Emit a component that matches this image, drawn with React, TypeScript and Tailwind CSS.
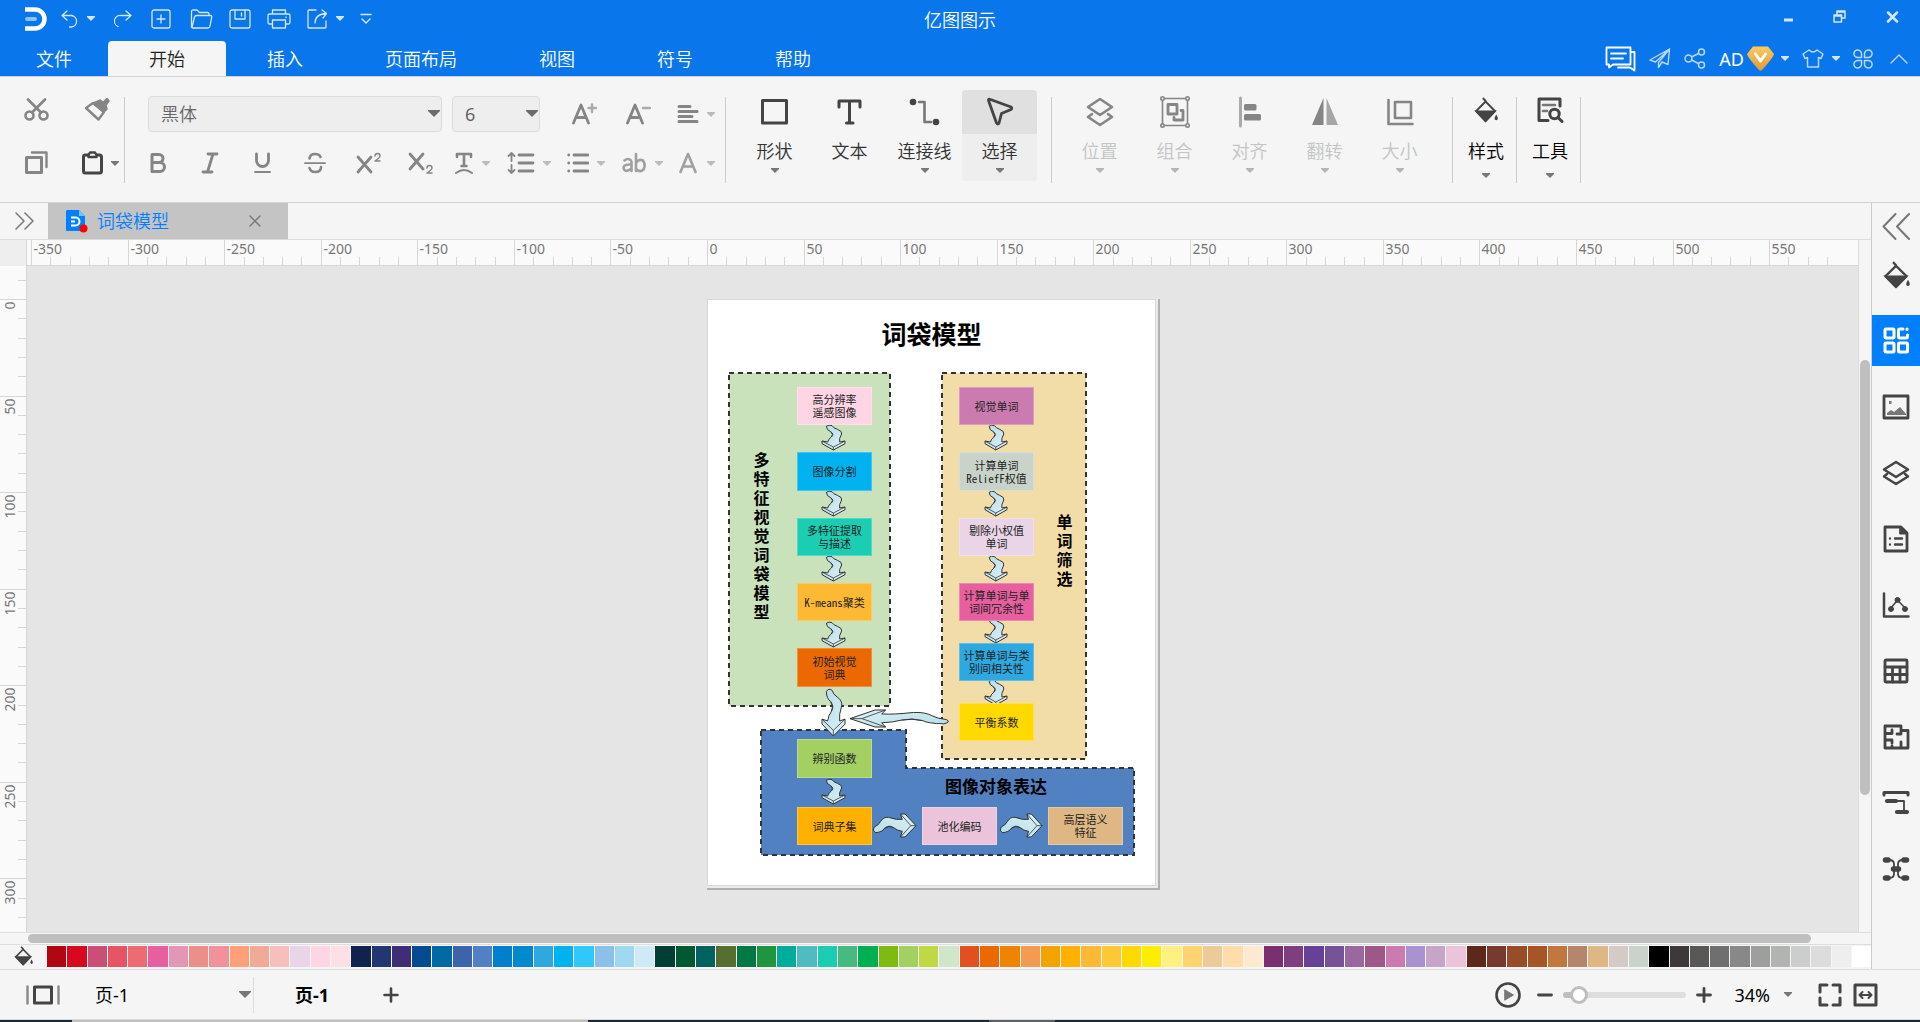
import React from 'react';
import clsx from 'clsx';

interface IconProps {
  w: number;
  h: number;
  sw?: number;
  className?: string;
  children: React.ReactNode;
}

const Icon = ({ w, h, sw = 2, className, children }: IconProps) => (
  <svg
    width={w}
    height={h}
    viewBox={`0 0 ${w} ${h}`}
    fill="none"
    stroke="currentColor"
    strokeWidth={sw}
    strokeLinecap="round"
    strokeLinejoin="round"
    aria-hidden="true"
    className={clsx('shrink-0', className)}
  >
    {children}
  </svg>
);

const Caret = ({ className }: { className?: string }) => (
  <svg width="8" height="5" viewBox="0 0 8 5" fill="currentColor" aria-hidden="true" className={clsx('shrink-0', className)}>
    <path d="M0 0H8V1L4 5L0 1Z" />
  </svg>
);

const BucketIcon = ({ w, h }: { w: number; h: number }) => (
  <svg width={w} height={h} viewBox="0 0 27 26" preserveAspectRatio="none" fill="none" stroke="currentColor" strokeWidth="2.2" aria-hidden="true" className="shrink-0">
    <path d="M10 1L13.500 4.500M2.500 14L13 4.500L23.500 14L13 24Z" strokeLinejoin="round" />
    <path d="M3 14.500H23L13 24Z" fill="currentColor" />
    <path d="M25 17.500Q27.500 21 26.500 22.500Q25 24 23.500 22.500Q22.500 21 25 17.500Z" fill="currentColor" stroke="none" />
  </svg>
);

/* ---------- title bar ---------- */

interface QuickAction {
  label: string;
  caret?: boolean;
  icon: React.ReactNode;
}

const editActions: QuickAction[] = [
  {
    label: '撤销',
    caret: true,
    icon: <Icon w={18} h={18} sw={1.3}><path d="M6 1L1 5.500L6 10M1 5.500H10.500A5.800 5.800 0 0 1 10.500 17H8.500" /></Icon>,
  },
  {
    label: '恢复',
    icon: <Icon w={18} h={18} sw={1.3}><path d="M12 1L17 5.500L12 10M17 5.500H7.500A5.800 5.800 0 0 0 4 16.500" /></Icon>,
  },
  {
    label: '新建',
    icon: <Icon w={20} h={20} sw={1.3}><rect x="1" y="1" width="18" height="18" rx="2" /><path d="M10 6V14M6 10H14" /></Icon>,
  },
  {
    label: '打开',
    icon: <Icon w={23} h={20} sw={1.3}><path d="M1.500 18V2.500Q1.500 1 3 1H7L9.500 3.500H17.500Q19 3.500 19 5V6.500M2 18.500L4.500 8Q5 6.500 6.500 6.500H20.500Q22 6.500 21.700 8L20 17Q19.500 19 18 19H2.500Q1.500 19 1.500 17" /></Icon>,
  },
];

const fileActions: QuickAction[] = [
  {
    label: '保存',
    icon: <Icon w={22} h={20} sw={1.3}><rect x="1" y="1" width="20" height="18" rx="2" /><path d="M6 1V10H16V1M12.500 4V7" /></Icon>,
  },
  {
    label: '打印',
    icon: <Icon w={24} h={20} sw={1.3}><path d="M5.500 5V1H18.500V5M5.500 15H2.500Q1 15 1 13.500V6.500Q1 5 2.500 5H21.500Q23 5 23 6.500V13.500Q23 15 21.500 15H18.500M5.500 11H18.500V19H5.500ZM19 8V8.500" /></Icon>,
  },
  {
    label: '导出',
    caret: true,
    icon: <Icon w={21} h={20} sw={1.3}><path d="M9 1H2Q1 1 1 2V18Q1 19 2 19H18Q19 19 19 18V12M8 14Q8 5 19.500 4.500M15 1L19.500 4.500L16 9" /></Icon>,
  },
  {
    label: '更多',
    icon: <Icon w={12} h={12} sw={1.500}><path d="M1 1.500H11M2 6L6 10L10 6" /></Icon>,
  },
];

const QuickButton = ({ label, icon, caret }: QuickAction) => (
  <button aria-label={label} className="flex items-center gap-2">
    {icon}
    {caret && <Caret />}
  </button>
);

const TitleBar = () => (
  <div className="grid h-[41px] grid-cols-[1fr_auto_1fr] items-start">
    <div className="flex h-[37px] items-center pl-[25px] text-[#d4e7fc]">
      <svg width="24" height="24" viewBox="0 0 24 24" fill="none" className="mr-3 shrink-0" aria-hidden="true">
        <path d="M0 2.500H10A9.500 9.500 0 0 1 10 21.500H0" stroke="#fff" strokeWidth="4.500" />
        <path d="M2 12H10" stroke="#8dc1f9" strokeWidth="4" strokeLinecap="round" />
      </svg>
      <div className="flex items-center gap-[19px]">
        {editActions.map(action => <QuickButton key={action.label} {...action} />)}
      </div>
      <div className="ml-4 flex items-center gap-4">
        {fileActions.map(action => <QuickButton key={action.label} {...action} />)}
      </div>
    </div>
    <h1 className="text-lg leading-10 text-white">亿图图示</h1>
    <div className="flex h-[33px] items-center justify-end gap-10 pr-[21px] text-[#d4e7fc]">
      <button aria-label="最小化" className="pt-[6px]"><Icon w={9} h={4} sw={3}><path d="M0 2H9" strokeLinecap="butt" /></Icon></button>
      <button aria-label="还原"><Icon w={13} h={13} sw={1.500}><path d="M4 5V1H12V8H9M4 2H12M1 5H8.500V12H1ZM1 6H8" /></Icon></button>
      <button aria-label="关闭"><Icon w={13} h={12} sw={2.500}><path d="M2 1.500L11 10.500M11 1.500L2 10.500" /></Icon></button>
    </div>
  </div>
);

const tabs = ['文件', '开始', '插入', '页面布局', '视图', '符号', '帮助'];

const MenuTabs = () => (
  <div className="flex h-[35px] justify-between">
    <nav className="flex">
      {tabs.map((tab, i) => (
        <button
          key={tab}
          className={clsx(
            'pt-px text-lg leading-[34px]',
            i === 0 ? 'px-9' : 'px-[41px]',
            tab === '开始' ? 'rounded-t-sm bg-[#f5f5f5] text-[#222]' : 'text-white'
          )}
        >
          {tab}
        </button>
      ))}
    </nav>
    <div className="flex items-center gap-[13px] pr-3 text-[#b9d9fc]">
      <button aria-label="评论" className="text-white">
        <Icon w={31} h={26} sw={1.800}><path d="M1.500 1.500H25.500V18.500H8L4 21.500V18.500H1.500ZM26 6H29.500V24.500L25 21.500H13M6 7.500H21M6 12.500H18" /></Icon>
      </button>
      <button aria-label="发送">
        <Icon w={22} h={21} sw={1.400}><path d="M20.500 1L1 12L6.500 14L20.500 1L19 16.500L13 14L9.500 19.500V14.500L20.500 1" /></Icon>
      </button>
      <button aria-label="分享">
        <Icon w={22} h={21} sw={1.500}><circle cx="4.500" cy="10.500" r="3.500" /><circle cx="17.500" cy="4" r="3" /><circle cx="17.500" cy="17" r="3" /><path d="M7.500 9L14.500 5.500M7.500 12L14.500 15.500" /></Icon>
      </button>
      <button className="flex items-center gap-[3px] text-lg font-normal text-white">
        AD
        <svg width="27" height="25" viewBox="0 0 27 25" aria-hidden="true">
          <defs><linearGradient id="gem" x1="0" y1="0" x2="0" y2="1"><stop offset="0" stopColor="#ffc95c" /><stop offset="1" stopColor="#e0993a" /></linearGradient></defs>
          <path d="M6 0.500H21L27 8Q26 12 15 24Q13.500 25.500 12 24Q1 12 0 8Z" fill="url(#gem)" />
          <path d="M8.500 8L13.500 15L18.500 8" fill="none" stroke="#fff" strokeWidth="3" strokeLinecap="round" strokeLinejoin="round" />
        </svg>
        <Caret className="ml-1 text-[#d4e7fc]" />
      </button>
      <button aria-label="皮肤" className="flex items-center gap-2">
        <Icon w={22} h={19} sw={1.500}><path d="M7 1L1 5L3 9.500L5.500 8.500V18H16.500V8.500L19 9.500L21 5L15 1Q11 5 7 1Z" /></Icon>
        <Caret className="text-[#d4e7fc]" />
      </button>
      <button aria-label="应用">
        <Icon w={20} h={20} sw={1.500}>
          <path d="M8.500 8.500H5A3.800 3.800 0 1 1 8.500 5ZM11.500 8.500V5A3.800 3.800 0 1 1 15 8.500ZM8.500 11.500V15A3.800 3.800 0 1 1 5 11.500ZM11.500 11.500H15A3.800 3.800 0 1 1 11.500 15Z" />
        </Icon>
      </button>
      <button aria-label="收起" className="pl-1">
        <Icon w={18} h={10} sw={1.400}><path d="M1 9L9 1L17 9" /></Icon>
      </button>
    </div>
  </div>
);

/* ---------- ribbon ---------- */

const Divider = () => <div className="mt-5 h-[86px] w-px shrink-0 bg-[#ccc]" />;

interface DropFieldProps {
  label: string;
  value: string;
  className: string;
}

const DropField = ({ label, value, className }: DropFieldProps) => (
  <div className={clsx('relative', className)}>
    <select aria-label={label} className="h-9 w-full appearance-none rounded-sm border border-[#dcdcdf] bg-[#eee] pl-3 text-lg leading-8 text-[#666]">
      <option>{value}</option>
    </select>
    <svg width="12" height="7" viewBox="0 0 12 7" fill="#6b6b6b" className="pointer-events-none absolute top-[14px] right-0.5" aria-hidden="true">
      <path d="M0 0H12V1L6 7L0 1Z" />
    </svg>
  </div>
);

const LetterA = <path d="M1.500 20L9 2L16.500 20M4.500 14.500H13.500" />;

const styleTools = [
  { label: '加粗', icon: <Icon w={20} h={22} sw={3}><path d="M4 2.500H11A4 4 0 0 1 11 10.500H4ZM4 10.500H12A4.300 4.300 0 0 1 12 19.500H4Z" /></Icon> },
  { label: '斜体', icon: <Icon w={20} h={22} sw={2.800}><path d="M8 2H17M3 20H12M13 2L7.500 20" /></Icon> },
  { label: '下划线', icon: <Icon w={20} h={22} sw={2.800}><path d="M4.500 2V8.500A6 6 0 0 0 16.500 8.500V2" /><path d="M3 20H18" strokeWidth="1.800" /></Icon> },
  { label: '删除线', icon: <Icon w={22} h={22} sw={2.600}><path d="M5.500 6.500Q6 2 11 2Q15.500 2 16.500 5M5.500 16Q6.500 20 11 20Q17 20 17 15" /><path d="M1 11.200H21" strokeWidth="1.800" /></Icon> },
  { label: '上标', icon: <Icon w={25} h={22} sw={2.800}><path d="M2 5L15 20M15 5L2 20" /><path d="M19 4Q19 1.500 21.500 1.500Q24 1.500 24 4Q24 5.500 19 9H24" strokeWidth="1.500" /></Icon> },
  { label: '下标', icon: <Icon w={25} h={22} sw={2.800}><path d="M2 2L15 17M15 2L2 17" /><path d="M19 16Q19 13.500 21.500 13.500Q24 13.500 24 16Q24 17.500 19 21H24" strokeWidth="1.500" /></Icon> },
];

const paragraphTools = [
  { label: '文字效果', icon: <Icon w={20} h={22} sw={2.600}><path d="M3 5V2H17V5M10 2V14M7.500 14H12.500" /><path d="M2 21Q10 15 18 21" strokeWidth="2" /></Icon> },
  { label: '行距', icon: <Icon w={28} h={22} sw={2.800}><path d="M12 3H26M12 11H26M12 19H26" /><path d="M4.500 1V9M1.500 4L4.500 1L7.500 4M4.500 13V21M1.500 18L4.500 21L7.500 18" strokeWidth="1.800" /></Icon> },
  { label: '项目符号', icon: <Icon w={22} h={22} sw={2.800}><path d="M7 3H21M7 11H21M7 19H21M1.700 3V3.100M1.700 11V11.100M1.700 19V19.100" /></Icon> },
  {
    label: '大小写',
    icon: <Icon w={25} h={22} sw={2.600} className="text-[#a0a0a0]"><path d="M2.500 8.500Q6 5.500 9 8.500Q9.500 9.500 9.500 11V19M9.500 12.500Q1.500 12 1.500 16Q3 21.500 9.500 16.500M14 2V19M14 11Q17 6.500 21 8.500Q24 13 21.500 17.500Q18 21 14 17" /></Icon>,
  },
  { label: '字体颜色', icon: <Icon w={20} h={22} sw={2.600} className="text-[#a0a0a0]">{LetterA}</Icon> },
];

const bigTools = [
  { label: '形状', caret: true, icon: <Icon w={28} h={28} sw={3}><rect x="1.500" y="2.500" width="24" height="22.500" /></Icon> },
  { label: '文本', caret: false, icon: <Icon w={28} h={28} sw={3}><path d="M3 9V3H24V9M13.500 3V25M10.500 25H17" /></Icon> },
  {
    label: '连接线',
    caret: true,
    icon: (
      <Icon w={32} h={28} sw={2.600}>
        <path d="M10 4H15.500V24H22" stroke="#777" />
        <circle cx="4" cy="4" r="2" fill="currentColor" />
        <circle cx="27" cy="24" r="2" fill="currentColor" />
      </Icon>
    ),
  },
];

const arrangeTools = [
  { label: '位置', icon: <Icon w={28} h={32} sw={2.600}><path d="M14 3L26 11L14 19L2 11ZM6 18L2 21L14 29L26 21L22 18" /></Icon> },
  {
    label: '组合',
    icon: (
      <Icon w={30} h={32} sw={1.600}>
        <rect x="2.500" y="2.500" width="25" height="27" />
        <g fill="#f5f5f5"><circle cx="2.500" cy="2.500" r="1.700" /><circle cx="27.500" cy="2.500" r="1.700" /><circle cx="2.500" cy="29.500" r="1.700" /><circle cx="27.500" cy="29.500" r="1.700" /></g>
        <path d="M8 8.500H17V18H8ZM21 14.500H23V24H14V21.500" strokeWidth="2.800" />
      </Icon>
    ),
  },
  {
    label: '对齐',
    icon: <Icon w={24} h={32} sw={3}><path d="M2.500 2V30" stroke="#aaa" /><path d="M7.500 9.500H17V13H7.500ZM7.500 19.500H21.500V23H7.500Z" fill="currentColor" /></Icon>,
  },
  {
    label: '翻转',
    icon: <Icon w={28} h={32} sw={0}><path d="M12.500 2V29H1Z" fill="currentColor" /><path d="M15.500 2V29H27Z" fill="#a6a6a6" /></Icon>,
  },
  { label: '大小', icon: <Icon w={28} h={32} sw={2.600}><path d="M2.500 4V28H26.500" /><rect x="9" y="6" width="16" height="16" /></Icon> },
];

const Ribbon = () => (
  <div className="flex h-[127px] border-y border-[#d2d2d2] bg-[#f5f5f5] text-[#858585]">
    <div className="grid w-[124px] shrink-0 grid-cols-[58px_42px] grid-rows-[44px_44px] items-center gap-y-[10px] pt-[10px] pl-6">
      <button aria-label="剪切">
        <Icon w={25} h={23} sw={2.600}><circle cx="5.500" cy="17.500" r="4" /><circle cx="19.500" cy="17.500" r="4" /><path d="M4 1.500L17 14.500M21 1.500L8 14.500" /></Icon>
      </button>
      <button aria-label="格式刷">
        <Icon w={28} h={25} sw={2.400}><path d="M4 11L11 6L22 15L16.500 22.500Z" /><path d="M12 6L18 3.500L21 6L25 2L26.500 4L23.500 8L24.500 12L21.500 14.500Z" fill="currentColor" /></Icon>
      </button>
      <button aria-label="复制">
        <Icon w={24} h={24} sw={3}><rect x="2.500" y="6.500" width="15" height="15" /><path d="M8 1.500H22.500V16" strokeWidth="2.400" /></Icon>
      </button>
      <button aria-label="粘贴" className="flex items-center gap-[7px] text-[#444]">
        <Icon w={22} h={24} sw={3}><rect x="1.500" y="4" width="18" height="18" rx="2" /><path d="M6.500 4L8 1.500H13L14.500 4V6H6.500Z" fill="#f5f5f5" strokeWidth="2.400" /></Icon>
        <Caret className="text-[#777]" />
      </button>
    </div>
    <Divider />
    <div className="w-[600px] shrink-0 pt-[19px] pr-[10px] pl-[23px]">
      <div className="flex items-center">
        <DropField label="字体" value="黑体" className="w-[294px]" />
        <DropField label="字号" value="6" className="ml-[10px] w-[88px] font-normal" />
        <button aria-label="增大字号" className="ml-8">
          <Icon w={25} h={22} sw={2.800}>{LetterA}<path d="M20 1.500V9M16.500 5H24" stroke="#aaa" strokeWidth="2.400" /></Icon>
        </button>
        <button aria-label="减小字号" className="ml-[29px]">
          <Icon w={25} h={22} sw={2.800}>{LetterA}<path d="M17 5H24" stroke="#aaa" strokeWidth="2.400" /></Icon>
        </button>
        <button aria-label="对齐方式" className="ml-auto flex items-center gap-2">
          <Icon w={22} h={20} sw={3}><path d="M2 2.500H13M2 7.500H20M2 12.500H15M2 17.500H20" /></Icon>
          <Caret className="text-[#bbb]" />
        </button>
      </div>
      <div className="mt-5 flex items-center">
        <div className="flex gap-[26px]">
          {styleTools.map(({ label, icon }) => (
            <button key={label} aria-label={label} className="w-[26px]">{icon}</button>
          ))}
        </div>
        <div className="ml-5 flex flex-1 justify-between">
          {paragraphTools.map(({ label, icon }) => (
            <button key={label} aria-label={label} className="flex items-center gap-2">
              {icon}
              <Caret className="text-[#bbb]" />
            </button>
          ))}
        </div>
      </div>
    </div>
    <Divider />
    <div className="flex pr-[14px] pl-[11px] pt-[13px] text-[#333]">
      {bigTools.map(({ label, icon, caret }) => (
        <button key={label} className="flex h-[91px] w-[75px] flex-col items-center">
          <span className="flex h-11 items-center text-[#444]">{icon}</span>
          <span className="pt-px text-lg leading-8">{label}</span>
          {caret && <Caret className="mt-px text-[#777]" />}
        </button>
      ))}
      <button className="flex h-[91px] w-[75px] flex-col items-center rounded-sm bg-[#eee]">
        <span className="flex h-11 w-full items-center justify-center rounded-t-sm bg-[#e0e0e0] text-[#444]">
          <Icon w={28} h={30} sw={2.800}><path d="M2.500 3.500Q2 1.500 4.500 2.500L25 10Q26.500 11 25 12.500L15.500 16.500L13 26Q12 28 10.500 26Z" /></Icon>
        </span>
        <span className="pt-px text-lg leading-8">选择</span>
        <Caret className="mt-px text-[#777]" />
      </button>
    </div>
    <Divider />
    <div className="flex pr-[15px] pl-[10px] pt-[13px]">
      {arrangeTools.map(({ label, icon }) => (
        <button key={label} className="flex h-[91px] w-[75px] flex-col items-center">
          <span className="flex h-11 items-center">{icon}</span>
          <span className="pt-px text-lg leading-8 text-[#c4c4c4]">{label}</span>
          <Caret className="mt-px text-[#b5b5b5]" />
        </button>
      ))}
    </div>
    <Divider />
    <button className="flex w-[63px] flex-col items-center pt-[13px] pl-[3px] text-[#444]">
      <span className="flex h-11 items-center pb-1"><BucketIcon w={24} h={26} /></span>
      <span className="pt-px text-lg leading-8 text-black">样式</span>
      <Caret className="mt-[6px] text-[#777]" />
    </button>
    <Divider />
    <button className="flex w-[63px] flex-col items-center pt-[13px] pl-[3px] text-[#444]">
      <span className="flex h-11 items-center pb-1">
        <Icon w={28} h={26} sw={3}><path d="M24 9V2H3V23.500H12" /><path d="M7 8H19M7 14H11" stroke="#777" strokeWidth="2.600" /><circle cx="18.500" cy="17" r="4.700" /><path d="M22 20.500L26 24.500" /></Icon>
      </span>
      <span className="pt-px text-lg leading-8 text-black">工具</span>
      <Caret className="mt-[6px] text-[#777]" />
    </button>
    <Divider />
  </div>
);

const DocTabs = () => (
  <div className="flex h-9 items-stretch">
    <button aria-label="展开符号库" className="flex w-12 items-center justify-center text-[#777]">
      <Icon w={19} h={18} sw={1.500}><path d="M1 1L9 9L1 17M10 1L18 9L10 17" /></Icon>
    </button>
    <div className="flex w-60 items-center bg-[#c4c4c4] pr-[27px] pl-[18px]">
      <svg width="22" height="23" viewBox="0 0 22 23" aria-hidden="true">
        <path d="M1 0H13L19 6V21H1Q0 21 0 20V1Z" fill="#0080ff" />
        <path d="M13 0L19 6H13Z" fill="#7fbfff" />
        <path d="M5 7.500H9.500A4 4 0 0 1 9.500 15.500H5M5 11.500H9" fill="none" stroke="#fff" strokeWidth="2" />
        <circle cx="17.500" cy="18.500" r="4" fill="red" />
      </svg>
      <span className="ml-[9px] text-lg leading-9 text-[#0080ff]">词袋模型</span>
      <button aria-label="关闭文档" className="ml-auto text-[#777]">
        <Icon w={12} h={12} sw={1.400}><path d="M1 1L11 11M11 1L1 11" /></Icon>
      </button>
    </div>
  </div>
);

/* ---------- rulers ---------- */

const STEP = 19.31; // px per 10 mm at the current zoom

const HorizontalRuler = () => (
  <svg className="h-[26px] w-full bg-[#fafafa] font-normal" aria-label="水平标尺">
    {Array.from({ length: 94 }, (_, i) => i - 35).map(n => {
      const x = Math.round(680 + n * STEP) + 0.5;
      const major = n % 5 === 0;
      return (
        <g key={n}>
          <line x1={x} x2={x} y1={major ? 0 : 17} y2={26} stroke="#d6d6d6" />
          {major && <text x={x + 2} y="14" fontSize="14" fill="#777">{n * 10}</text>}
        </g>
      );
    })}
    <line x1="0" x2="100%" y1="25.500" y2="25.500" stroke="#d6d6d6" />
  </svg>
);

const VerticalRuler = () => (
  <svg className="h-full w-[27px] bg-[#fafafa] font-normal" aria-label="垂直标尺">
    {Array.from({ length: 34 }, (_, i) => i - 1).map(n => {
      const y = Math.round(33 + n * STEP) + 0.5;
      const major = n % 5 === 0;
      return (
        <g key={n}>
          <line y1={y} y2={y} x1={major ? 0 : 18} x2={26} stroke="#d6d6d6" />
          {major && <text transform={`translate(15 ${y + 2}) rotate(-90)`} textAnchor="end" fontSize="14" fill="#777">{n * 10}</text>}
        </g>
      );
    })}
    <line y1="0" y2="100%" x1="26.500" x2="26.500" stroke="#d6d6d6" />
  </svg>
);

/* ---------- diagram ---------- */

interface Node {
  x: number;
  y: number;
  h?: number;
  fill: string;
  lines: string[];
}

const nodes: Node[] = [
  { x: 89, y: 87, fill: '#fed5e5', lines: ['高分辨率', '遥感图像'] },
  { x: 89, y: 152, h: 39, fill: '#00b2f0', lines: ['图像分割'] },
  { x: 89, y: 218, fill: '#1bcdb3', lines: ['多特征提取', '与描述'] },
  { x: 89, y: 283, fill: '#fdb933', lines: ['K-means聚类'] },
  { x: 89, y: 348, h: 39, fill: '#ec6800', lines: ['初始视觉', '词典'] },
  { x: 89, y: 439, h: 39, fill: '#a4d063', lines: ['辨别函数'] },
  { x: 89, y: 507, fill: '#ffb000', lines: ['词典子集'] },
  { x: 251, y: 87, fill: '#cc7bb0', lines: ['视觉单词'] },
  { x: 251, y: 152, h: 39, fill: '#c9d3ca', lines: ['计算单词', 'ReliefF权值'] },
  { x: 251, y: 218, fill: '#ead5e8', lines: ['剔除小权值', '单词'] },
  { x: 251, y: 283, fill: '#e75f9f', lines: ['计算单词与单', '词间冗余性'] },
  { x: 251, y: 343, fill: '#2da8e1', lines: ['计算单词与类', '别间相关性'] },
  { x: 251, y: 403, fill: '#ffd900', lines: ['平衡系数'] },
  { x: 214, y: 507, fill: '#ebc3da', lines: ['池化编码'] },
  { x: 340, y: 507, fill: '#dfb784', lines: ['高层语义', '特征'] },
];

interface Arrow {
  x: number;
  y: number;
  w: number;
  h: number;
  dir?: 'left' | 'right';
}

const arrows: Arrow[] = [
  { x: 115, y: 126, w: 23, h: 25 },
  { x: 115, y: 192, w: 23, h: 25 },
  { x: 115, y: 257, w: 23, h: 25 },
  { x: 115, y: 323, w: 23, h: 25 },
  { x: 115, y: 390, w: 23, h: 47 },
  { x: 115, y: 480, w: 23, h: 25 },
  { x: 278, y: 126, w: 22, h: 25 },
  { x: 278, y: 192, w: 22, h: 25 },
  { x: 278, y: 257, w: 22, h: 25 },
  { x: 278, y: 319, w: 22, h: 25 },
  { x: 278, y: 381, w: 22, h: 25 },
  { x: 166, y: 515, w: 43, h: 23, dir: 'right' },
  { x: 293, y: 515, w: 42, h: 23, dir: 'right' },
  { x: 143, y: 411, w: 99, h: 17, dir: 'left' },
];

const WaveArrow = ({ x, y, w, h, dir }: Arrow) => {
  const flat = dir !== undefined;
  const sx = w / (flat ? 75 : 69);
  const sy = h / (flat ? 69 : 75);
  const turn = dir === 'right' ? 'matrix(0 -1 1 0 0 69)' : dir === 'left' ? 'matrix(0 -1 -1 0 75 69)' : '';
  return (
    <g transform={`translate(${x} ${y}) scale(${sx} ${sy}) ${turn}`}>
      <path
        d="M13 4Q20 -2 30 2Q34 9 46 13Q61 18 59 27Q50 42 53 51L69 48V56L34 75L0 56V48L17 51Q19 42 28 36Q36 28 26 20Q14 16 13 4Z"
        fill="url(#ice)"
        stroke="#333"
        vectorEffect="non-scaling-stroke"
      />
      <path d="M0 48L34 66L69 48M34 66V75M26 20Q38 28 28 36" fill="none" stroke="#333" strokeWidth="0.800" vectorEffect="non-scaling-stroke" />
    </g>
  );
};

const VerticalLabel = ({ text, className }: { text: string; className: string }) => (
  <div className={clsx('absolute flex w-[19px] flex-col items-center text-base leading-[19px] font-bold text-black', className)}>
    {text.split('').map((c, i) => <span key={i}>{c}</span>)}
  </div>
);

const Diagram = () => (
  <div className="absolute top-[33px] left-[680px] h-[591px] w-[453px] border-r-2 border-b-2 border-[#b0b0b0] bg-[#ebebeb]">
    <div className="relative h-[587px] w-[449px] border border-[#d8d8d8] bg-white">
      <svg className="absolute inset-0" width="447" height="585" viewBox="1 1 447 585" fill="none" aria-hidden="true">
        <defs>
          <linearGradient id="ice" x1="0" y1="0" x2="1" y2="1"><stop offset="0" stopColor="#b4dce8" /><stop offset="1" stopColor="#def1f6" /></linearGradient>
        </defs>
        <g stroke="#333" strokeWidth="2" strokeDasharray="5 4">
          <rect x="22" y="74" width="161" height="333" fill="#c9e2bb" />
          <rect x="235" y="74" width="144" height="386" fill="#f2dda9" />
          <path d="M54 431H199V469H427V556H54Z" fill="#5281c1" />
        </g>
        {arrows.map((arrow, i) => <WaveArrow key={i} {...arrow} />)}
      </svg>
      <h2 className="absolute top-4 w-full text-center text-[25px] leading-9 font-bold text-black">词袋模型</h2>
      <VerticalLabel text="多特征视觉词袋模型" className="top-[151px] left-[44px]" />
      <VerticalLabel text="单词筛选" className="top-[213px] left-[347px]" />
      <h3 className="absolute top-[475px] left-[227px] w-[122px] text-center text-[17px] leading-6 font-bold text-black">图像对象表达</h3>
      {nodes.map(({ x, y, h = 38, fill, lines }) => (
        <div
          key={lines.join('')}
          className="absolute flex w-[75px] flex-col items-center justify-center border border-white/25 font-['Noto_Sans_Mono_CJK_SC','Noto_Sans_CJK_SC',sans-serif] text-[11px] leading-[13px] font-normal whitespace-nowrap text-[#222]"
          style={{ left: x, top: y, height: h, backgroundColor: fill }}
        >
          {lines.map(line => <span key={line}>{line}</span>)}
        </div>
      ))}
    </div>
  </div>
);

/* ---------- right panel ---------- */

const panels = [
  { label: '填充', icon: <BucketIcon w={27} h={28} /> },
  {
    label: '符号',
    active: true,
    icon: <Icon w={27} h={27} sw={3}><rect x="2" y="2" width="9" height="9" rx="1" /><path d="M20 2H17Q15.500 2 15.500 3.500V9.500Q15.500 11 17 11H23Q24.500 11 24.500 9.500V8M24 2V2.500" /><rect x="2" y="16" width="9" height="9" rx="1" /><rect x="15.500" y="16" width="9" height="9" rx="1" /></Icon>,
  },
  {
    label: '图片',
    icon: <Icon w={28} h={26} sw={2.800}><rect x="2" y="2" width="24" height="22" /><path d="M5 21V19L9 16L12 18L18 13L24 20V21Z" fill="#777" stroke="none" /><path d="M7 7H9.500V10H7Z" fill="#777" stroke="none" /></Icon>,
  },
  { label: '图层', icon: <Icon w={28} h={26} sw={2.500}><path d="M14 2L26 9.500L14 17L2 9.500ZM5 14L2 16.500L14 24L26 16.500L23 14" /></Icon> },
  { label: '页面', icon: <Icon w={26} h={28} sw={2.800}><path d="M2 2H18L24 8V26H2Z" /><path d="M17 2L24 9H17Z" fill="currentColor" strokeWidth="1" /><path d="M7 13.500V13.500M12 13.500H19M7 19.500V19.500M12 19.500H19" strokeWidth="2.400" /></Icon> },
  {
    label: '图表',
    icon: <Icon w={28} h={26} sw={2.500}><path d="M2 1.500V24.500H26.500" /><g strokeWidth="1.600"><path d="M9 16L15.500 8L23 16" /></g><g fill="currentColor" strokeWidth="1"><circle cx="9" cy="17" r="2.500" /><circle cx="15.500" cy="8" r="2.500" /><circle cx="23" cy="17" r="2.500" /></g></Icon>,
  },
  { label: '表格', icon: <Icon w={26} h={26} sw={2.800}><rect x="2" y="2" width="22" height="22" rx="1" /><path d="M2 9H24M2 16.500H24M9.500 9V24M17 9V24" /></Icon> },
  { label: '平面图', icon: <Icon w={27} h={26} sw={2.800}><path d="M2 2H18V6.500H25V24H2ZM2 9.500H9V6M2 16H9V19M9 24V22M18 6.500V10H14M18 18V24" /></Icon> },
  {
    label: '甘特图',
    icon: <Icon w={28} h={26} sw={3}><path d="M2 5V2.500H26V5" /><path d="M5 11H14M15 22H25" strokeWidth="4.200" /><path d="M14 11H22V22" strokeWidth="1.800" /></Icon>,
  },
  {
    label: '思维导图',
    icon: <Icon w={28} h={26} sw={1.800}><path d="M7 4Q12 4 12 8V18Q12 22 7 22M21 4Q16 4 16 8V18Q16 22 21 22M10 13H18" /><path d="M3.500 4H6M22 4H24.500M3.500 22H6M22 22H24.500M11.500 13H16.500" strokeWidth="5.500" /></Icon>,
  },
];

const SidePanel = () => (
  <aside className="flex w-[49px] shrink-0 flex-col items-stretch border-l border-[#ccc] text-[#444]">
    <button aria-label="展开面板" className="flex h-[46px] items-center justify-center text-[#777]">
      <Icon w={28} h={27} sw={2}><path d="M13.500 1L1.500 13.500L13.500 26M27 1L15 13.500L27 26" /></Icon>
    </button>
    <div className="flex flex-col gap-[15px]">
      {panels.map(({ label, icon, active }) => (
        <button key={label} aria-label={label} className={clsx('flex h-[51px] items-center justify-center', active && 'bg-[#0080ff] text-white')}>
          {icon}
        </button>
      ))}
    </div>
  </aside>
);

/* ---------- colours and status ---------- */

const palette = `
  b00710 d9091d c94f77 e95464 ec6c71 e75f9f e397b5 ed8f89 f0919b ffa07a f0ab97 f6bfbd ead5e8 fed5e5 fde0e5
  11224f 22376f 402d77 064a91 0069a4 3e63ad 5281c3 007fcf 0089cf 2da8e1 00b2f0 30c7f9 8bc0e9 a0d8ef cfeaf6
  004034 005930 00635f 566e30 007945 1e963f 00ad9d 50bcc2 1bcdb3 47ba7f 00b050 7fba10 a4d063 bfd845 cfe6c9
  e25020 ec6800 f08300 f39a53 f2a502 ffb000 fdb933 fac933 ffd900 ffed00 fdf182 ffd470 ebcc99 ffdcaa fde8d0
  7a3070 7f3e80 674196 765396 98689e 9d5788 cc7bb0 aa92d0 c7a5c8 ebc3da
  5b281a 773a30 964d28 a95427 c17840 b5866b dfb784 d5cbc6 c9d3ca
  000000 3e3838 5a5757 6f6f6f 888888 9d9f9d b2b4b2 cccecd dcdcdc eeeeee ffffff
`.trim().split(/\s+/);

const ColorBar = () => (
  <div className="flex h-[25px] items-start border-t border-[#dedede] pt-px">
    <button aria-label="填充颜色" className="flex w-[47px] shrink-0 items-center justify-center text-[#444]">
      <BucketIcon w={19} h={20} />
    </button>
    <div className="flex h-[21px] flex-1 gap-px">
      {palette.map(color => (
        <button key={color} aria-label={`#${color}`} className="flex-1" style={{ backgroundColor: `#${color}` }} />
      ))}
    </div>
  </div>
);

const StatusBar = () => (
  <footer className="flex h-[51px] items-center justify-between border-y border-[#dcdcdc] text-lg text-black">
    <div className="flex items-center">
      <button aria-label="页面视图" className="ml-[26px] text-[#444]">
        <Icon w={34} h={20} sw={3}><rect x="8.500" y="2" width="17" height="16" /><path d="M1.500 1.500V18.500M32.500 1.500V18.500" stroke="#888" strokeWidth="2.400" /></Icon>
      </button>
      <div className="relative ml-7 w-[166px] border-r border-[#dcdcdc]">
        <select aria-label="页面" className="h-9 w-full appearance-none bg-transparent pl-[7px] font-normal">
          <option>页-1</option>
        </select>
        <svg width="12" height="7" viewBox="0 0 12 7" fill="#777" className="pointer-events-none absolute top-[14px] right-0.5" aria-hidden="true">
          <path d="M0 0H12V1L6 7L0 1Z" />
        </svg>
      </div>
      <button className="ml-[41px] font-bold">页-1</button>
      <button aria-label="添加页面" className="ml-[54px] text-[#444]">
        <Icon w={16} h={16} sw={2.600}><path d="M8 1.500V14.500M1.500 8H14.500" /></Icon>
      </button>
    </div>
    <div className="flex items-center pr-[42px] text-[#444]">
      <button aria-label="播放"><Icon w={26} h={26} sw={2.600}><circle cx="13" cy="13" r="11.500" /><path d="M10 8L18.500 13L10 18Z" fill="#777" stroke="#777" strokeWidth="1" /></Icon></button>
      <button aria-label="缩小" className="ml-4"><Icon w={16} h={16} sw={2.800}><path d="M1.500 8H14.500" /></Icon></button>
      <input
        type="range"
        aria-label="缩放"
        min="0"
        max="100"
        defaultValue="6"
        className="ml-[10px] h-[18px] w-[123px] appearance-none bg-transparent [&::-webkit-slider-runnable-track]:h-1.5 [&::-webkit-slider-runnable-track]:rounded-full [&::-webkit-slider-runnable-track]:bg-[linear-gradient(to_right,#bebebe_12%,#dedede_12%)] [&::-webkit-slider-thumb]:-mt-1.5 [&::-webkit-slider-thumb]:h-[18px] [&::-webkit-slider-thumb]:w-[18px] [&::-webkit-slider-thumb]:appearance-none [&::-webkit-slider-thumb]:rounded-full [&::-webkit-slider-thumb]:border-[3px] [&::-webkit-slider-thumb]:border-[#bebebe] [&::-webkit-slider-thumb]:bg-white"
      />
      <button aria-label="放大" className="ml-[10px]"><Icon w={16} h={16} sw={2.800}><path d="M8 1.500V14.500M1.500 8H14.500" /></Icon></button>
      <button className="ml-[22px] flex items-center gap-[14px] font-normal text-black">
        34%
        <Caret className="text-[#777]" />
      </button>
      <button aria-label="全屏" className="ml-[26px]"><Icon w={24} h={24} sw={3}><path d="M2 9V2H9M15 2H22V9M22 15V22H15M9 22H2V15" /></Icon></button>
      <button aria-label="适应宽度" className="ml-[11px]"><Icon w={25} h={24} sw={3}><rect x="2" y="2" width="21" height="20" /><path d="M7 12H18M9.500 9L6.500 12L9.500 15M15.500 9L18.500 12L15.500 15" strokeWidth="2" /></Icon></button>
    </div>
  </footer>
);

const App = () => (
  <div className="flex h-screen flex-col overflow-hidden bg-[#f5f5f5] font-['Noto_Sans','Noto_Sans_CJK_SC',sans-serif] font-[350] select-none">
    <header className="bg-[#0a76eb]">
      <TitleBar />
      <MenuTabs />
    </header>
    <Ribbon />
    <div className="flex min-h-0 flex-1">
      <main className="flex min-w-0 flex-1 flex-col">
        <DocTabs />
        <div className="flex h-[27px] shrink-0 border-t border-[#dcdcdc]">
          <div className="w-[27px] shrink-0 border-r border-[#d6d6d6] bg-[#eee]" />
          <div className="min-w-0 flex-1"><HorizontalRuler /></div>
          <div className="w-[13px] border-l border-[#dcdcdc]" />
        </div>
        <div className="flex min-h-0 flex-1">
          <VerticalRuler />
          <div className="relative flex-1 overflow-hidden bg-[#e5e5e5]">
            <Diagram />
          </div>
          <div className="flex w-[13px] flex-col items-center border-l border-[#dcdcdc] pt-[94px]">
            <div className="h-[76%] w-[10px] rounded-full bg-[#bfbfbf]" />
          </div>
        </div>
        <div className="flex h-3 items-center border-t border-[#dedede] pr-[60px] pl-7">
          <div className="h-[9px] flex-1 rounded-full bg-[#bfbfbf]" />
        </div>
        <ColorBar />
      </main>
      <SidePanel />
    </div>
    <StatusBar />
    <div className="flex h-0.5 bg-[#1b2832]">
      <div className="ml-[72px] w-[516px] bg-[#bfbfbf]" />
      <div className="ml-[401px] w-[66px] bg-[#5a6064]" />
    </div>
  </div>
);

export default App;
